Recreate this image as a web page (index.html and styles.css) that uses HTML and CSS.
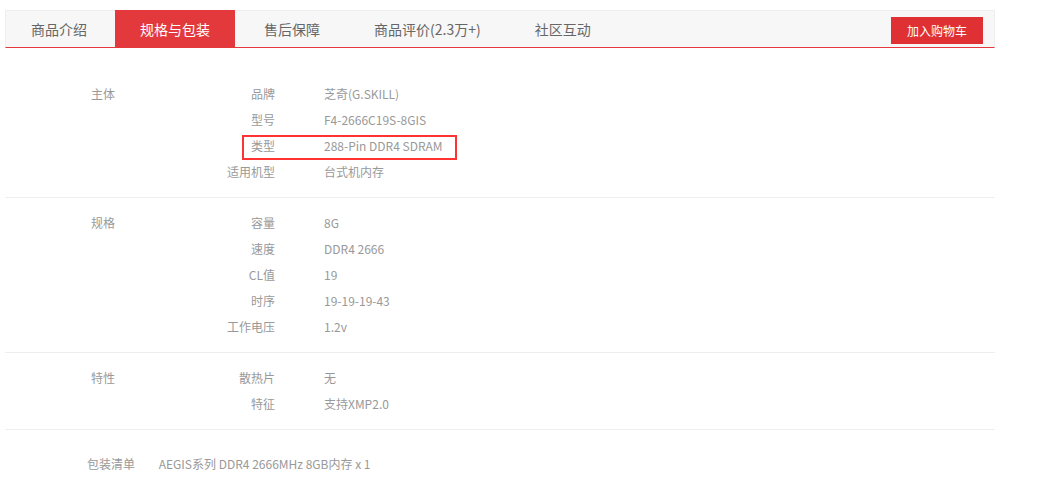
FILE: index.html
```html
<!DOCTYPE html>
<html lang="zh-CN">
<head>
	<meta charset="UTF-8">
	<title>规格与包装</title>
	<link rel="stylesheet" href="styles.css">
</head>
<body>

	<div class="wrap">
		<div class="tabs">
			<a class="tab" href="#">商品介绍</a>
			<a class="tab current" href="#">规格与包装</a>
			<a class="tab" href="#">售后保障</a>
			<a class="tab" href="#">商品评价(2.3万+)</a>
			<a class="tab" href="#">社区互动</a>
			<a class="add-cart" href="#">加入购物车</a>
		</div>

		<div class="spec first">
			<div class="spec-name">主体</div>
			<div class="spec-list">
				<div class="item"><span class="key">品牌</span><span class="val">芝奇(G.SKILL)</span></div>
				<div class="item"><span class="key">型号</span><span class="val">F4-2666C19S-8GIS</span></div>
				<div class="item mark"><span class="key">类型</span><span class="val">288-Pin DDR4 SDRAM</span><span class="mark-box"></span></div>
				<div class="item"><span class="key">适用机型</span><span class="val">台式机内存</span></div>
			</div>
		</div>

		<div class="spec">
			<div class="spec-name">规格</div>
			<div class="spec-list">
				<div class="item"><span class="key">容量</span><span class="val">8G</span></div>
				<div class="item"><span class="key">速度</span><span class="val">DDR4 2666</span></div>
				<div class="item"><span class="key">CL值</span><span class="val">19</span></div>
				<div class="item"><span class="key">时序</span><span class="val">19-19-19-43</span></div>
				<div class="item"><span class="key">工作电压</span><span class="val">1.2v</span></div>
			</div>
		</div>

		<div class="spec">
			<div class="spec-name">特性</div>
			<div class="spec-list">
				<div class="item"><span class="key">散热片</span><span class="val">无</span></div>
				<div class="item"><span class="key">特征</span><span class="val">支持XMP2.0</span></div>
			</div>
		</div>

		<div class="package">
			<span class="package-key">包装清单</span>
			<span class="package-val">AEGIS系列 DDR4 2666MHz 8GB内存 x 1</span>
		</div>
	</div>

</body>
</html>
```

FILE: styles.css
```css
* {
	margin: 0;
	padding: 0;
}

body {
	background: #fff;
	font-family: "Noto Sans CJK SC", sans-serif;
	font-size: 12px;
	color: #999;
}

a {
	text-decoration: none;
}

.wrap {
	width: 990px;
	margin: 10px 0 0 5px;
}

/* 顶部标签栏 */
.tabs {
	display: flex;
	height: 36px;
	background: #f7f7f7;
	border: 1px solid #eee;
	border-bottom: 1px solid #e4393c;
}

.tab {
	padding: 0 25px;
	margin-right: 4px;
	line-height: 36px;
	font-size: 14px;
	color: #666;
}

.tab:first-child {
	margin-right: 3px;
}

.tab.current {
	margin-top: -1px;
	height: 37px;
	line-height: 38px;
	background: #e4393c;
	color: #fff;
}

.add-cart {
	margin: 6px 11px 0 auto;
	width: 92px;
	height: 27px;
	line-height: 27px;
	text-align: center;
	background: #df3033;
	color: #fff;
	font-size: 12px;
}

/* 规格分组 */
.spec {
	display: flex;
	padding: 12px 0 12px 86px;
	border-bottom: 1px solid #eee;
}

.spec.first {
	margin-top: 21px;
}

.spec-name {
	width: 90px;
	line-height: 26px;
}

.item {
	position: relative;
	display: flex;
	line-height: 26px;
}

.key {
	width: 94px;
	text-align: right;
}

.val {
	margin-left: 49px;
}

.mark-box {
	position: absolute;
	left: 61px;
	top: 2px;
	width: 211px;
	height: 21px;
	border: 2px solid #f33;
}

/* 包装清单 */
.package {
	padding: 21px 0 0 82px;
	line-height: 26px;
}

.package-val {
	margin-left: 21px;
}
```
